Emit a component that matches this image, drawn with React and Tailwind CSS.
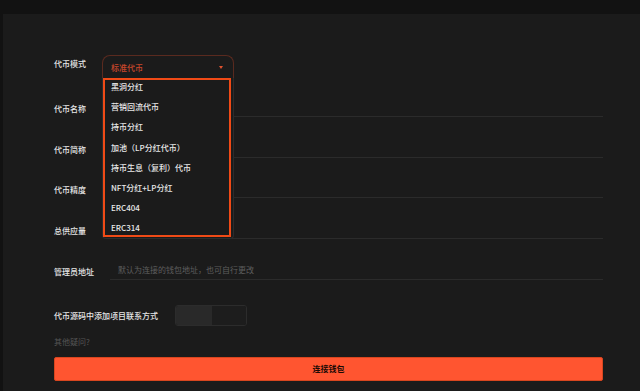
import React from "react";

const font = { fontFamily: '"Noto Sans CJK SC", "Noto Sans", sans-serif' };

const items = [
  "黑洞分红",
  "营销回流代币",
  "持币分红",
  "加池（LP分红代币）",
  "持币生息（复利）代币",
  "NFT分红+LP分红",
  "ERC404",
  "ERC314",
];

function TextRow({ label, placeholder, className = "" }) {
  return (
    <div className={"flex items-end h-[25px] " + className}>
      <div className="w-[56px] shrink-0 text-[8px] font-medium leading-[12px] pb-[2px] text-[#e6e6e6]">
        {label}
      </div>
      <div className="flex-1 h-full border-b border-[#2b2b2b] flex items-end pl-[8px] pb-[3px]">
        {placeholder && (
          <span className="text-[8px] leading-[12px] text-[#5e5e5e]">{placeholder}</span>
        )}
      </div>
    </div>
  );
}

export default function App() {
  return (
    <div className="w-[640px] h-[391px] bg-[#121212] flex flex-col overflow-hidden" style={font}>
      <div className="h-[14px] shrink-0" />
      <div className="flex-1 ml-[3px] bg-[#1b1b1b] pl-[51px] pr-[37px] pt-[41px]">
        {/* select row */}
        <div className="flex items-center h-[23px] relative z-10">
          <div className="w-[48px] shrink-0 text-[8px] font-medium leading-[12px] text-[#e6e6e6] -mt-[5px]">代币模式</div>
          <div className="relative w-[132px] h-[23px]">
            <div className="h-full border border-b-0 border-[#5a2a1f] rounded-t-[8px] flex items-center justify-between pl-[8px] pr-[10px] pt-[1px]">
              <span className="text-[8px] font-medium leading-[12px] text-[#c9472b]">标准代币</span>
              <span className="w-0 h-0 border-l-[2.5px] border-r-[2.5px] border-t-[3px] border-l-transparent border-r-transparent border-t-[#e0522f]" />
            </div>
            <div className="absolute left-0 top-[23px] w-[132px] h-[161px] bg-[#1b1b1b] border-x border-b border-[#2c2c2c] rounded-b-[4px]">
              <div className="mr-[2px] h-[159px] border-2 border-[#f04a16] overflow-hidden">
                <div className="-mt-[3px] pl-[6px]">
                  {items.map((it) => (
                    <div key={it} className="h-[20.2px] flex items-center text-[8px] font-medium text-[#e8e8e8] whitespace-nowrap">
                      {it}
                    </div>
                  ))}
                </div>
              </div>
            </div>
          </div>
        </div>

        <TextRow label="代币名称" className="mt-[14px]" />
        <TextRow label="代币简称" className="mt-[16px]" />
        <TextRow label="代币精度" className="mt-[15px]" />
        <TextRow label="总供应量" className="mt-[16px]" />
        <TextRow label="管理员地址" placeholder="默认为连接的钱包地址，也可自行更改" className="mt-[16px]" />

        {/* toggle row */}
        <div className="flex items-center mt-[25px] h-[21px]">
          <div className="w-[121px] shrink-0 text-[8px] font-medium leading-[12px] text-[#e6e6e6]">代币源码中添加项目联系方式</div>
          <div className="w-[72px] h-[21px] border border-[#2c2c2c] rounded-[3px] flex overflow-hidden">
            <div className="w-[36px] h-full bg-[#292929]" />
            <div className="flex-1 h-full bg-[#1d1d1d]" />
          </div>
        </div>

        <div className="mt-[9px] text-[8px] leading-[13px] text-[#555555]">其他疑问?</div>

        <div className="mt-[9px] h-[24px] bg-[#ff5530] rounded-[2px] border border-[#d8461f] flex items-center justify-center">
          <span className="text-[8px] font-bold text-[#1a0a05]">连接钱包</span>
        </div>
      </div>
    </div>
  );
}
